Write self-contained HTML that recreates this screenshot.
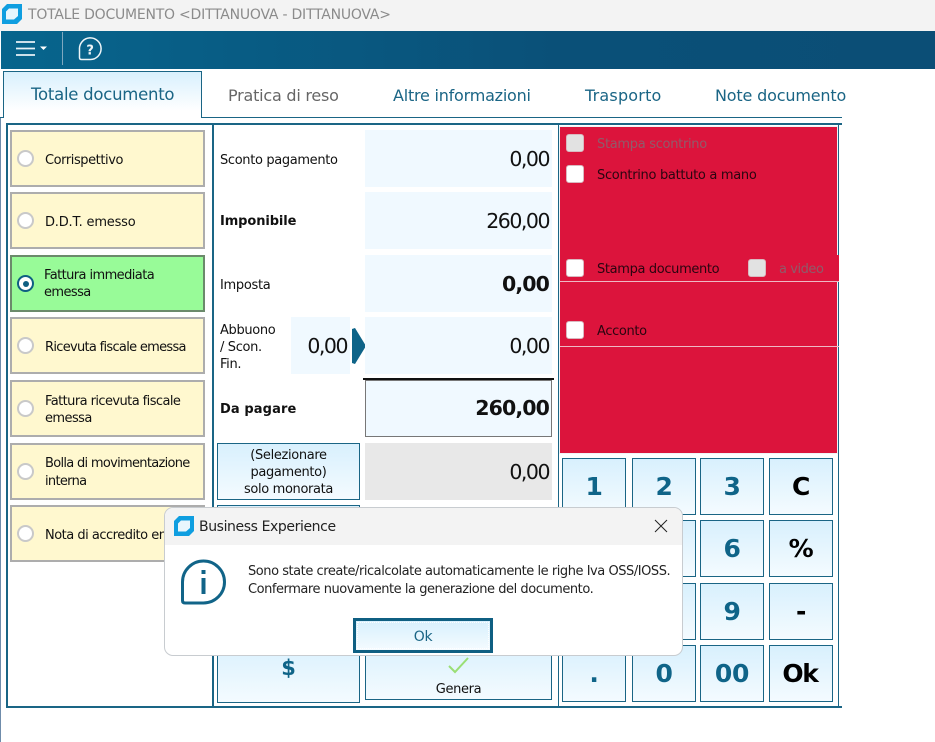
<!DOCTYPE html>
<html><head><meta charset="utf-8">
<style>
html,body{margin:0;padding:0;background:#fff}
#p{position:relative;width:935px;height:742px;overflow:hidden;background:#fff;font-family:"DejaVu Sans","Liberation Sans",sans-serif;font-size:13px;letter-spacing:-.35px;color:#111}
#p div,#p svg,#p span{position:absolute;box-sizing:border-box}
.t{white-space:nowrap;line-height:17px}
.tab{font-size:16px;white-space:nowrap;color:#1a6585;top:86px;line-height:20px;letter-spacing:-.22px}
.r{left:10px;width:195px;height:57px;background:#fff8cf;border:2px solid #adadad}
.rd{left:17px;width:17px;height:17px;border-radius:50%;background:#fff;border:2px solid #c9c9c9}
.v{left:365px;width:187px;height:57px;background:#f0f9ff;text-align:right;padding-right:3px;font-size:20.500px;line-height:58px;letter-spacing:-1.500px;color:#111}
.vb{font-weight:bold;letter-spacing:-.9px}
.b{background:linear-gradient(#d8f0fd,#f4fbff);border:1.5px solid #1a6585;text-align:center}
.k{width:64px;height:57px;background:linear-gradient(#d8f0fd,#f4fbff);border:1.5px solid #1a6585;text-align:center;font-size:25px;font-weight:bold;line-height:55px;color:#0f6488;letter-spacing:-.3px}
.c{left:566px;width:18px;height:18px;background:#fff;border:1px solid #d9b9c0;border-radius:3px}
</style></head><body><div id="p">
<div style="left:0;top:0;width:935px;height:31px;background:#f3f3f3"></div>
<svg style="left:2px;top:4px" width="20" height="20" viewBox="0 0 20 20"><path d="M5 0H20V15L15 20H0V5Z" fill="#0f9ee0"/><path d="M7 4.500H16V12L12 15.500H4V7.500Z" fill="#e8f6fd"/></svg>
<div class="t" style="left:28px;top:7px;font-size:14px;color:#8b8b8b;letter-spacing:-.23px">TOTALE DOCUMENTO &lt;DITTANUOVA - DITTANUOVA&gt;</div>
<div style="left:1px;top:31px;width:934px;height:38px;background:linear-gradient(90deg,#07658d,#0a5078 60%,#0b4e76)"></div>
<svg style="left:15px;top:40px" width="34" height="18" viewBox="0 0 34 18"><path d="M1 2H20M1 8.500H20M1 15H20" stroke="#e8f2f7" stroke-width="1.700" fill="none"/><path d="M25 6.500H32L28.500 10Z" fill="#fff"/></svg>
<div style="left:62px;top:32px;width:1px;height:33px;background:#7fa8bf"></div>
<svg style="left:78px;top:37px" width="25" height="24" viewBox="0 0 25 24"><path d="M1.500 12.500A10.800 10.800 0 1 1 12.500 22.500H3.500Q1.500 22.500 1.500 20.500Z" fill="none" stroke="#eef5f8" stroke-width="1.500"/><text x="12" y="17.500" font-family="DejaVu Sans" font-weight="bold" font-size="13" fill="#eef5f8" text-anchor="middle">?</text></svg>

<div style="left:0;top:118px;width:1px;height:624px;background:#6f8cab"></div>
<div style="left:0;top:117px;width:4px;height:1px;background:#1a6585"></div>
<div style="left:201px;top:117px;width:641px;height:1px;background:#1a6585"></div>
<div style="left:6px;top:123px;width:836px;height:1.500px;background:#1a6585"></div>
<div style="left:6px;top:123px;width:1.500px;height:584px;background:#1a6585"></div>
<div style="left:212px;top:123px;width:2px;height:584px;background:#1a6585"></div>
<div style="left:6px;top:706px;width:836px;height:1.500px;background:#1a6585"></div>
<div style="left:558px;top:124px;width:1px;height:582px;background:#1a6585"></div>
<div style="left:838px;top:124px;width:1px;height:582px;background:#1a6585"></div>

<div style="left:3px;top:71px;width:199px;height:47px;background:linear-gradient(#d8f0fd,#fff 85%);border:1px solid #1a6585;border-bottom:0"></div>
<div class="tab" style="left:31px;top:85px;font-size:16.500px;letter-spacing:-.25px">Totale documento</div>
<div class="tab" style="left:228px;color:#666;letter-spacing:-.22px">Pratica di reso</div>
<div class="tab" style="left:393px;letter-spacing:-.22px">Altre informazioni</div>
<div class="tab" style="left:585px;letter-spacing:.2px">Trasporto</div>
<div class="tab" style="left:715px;letter-spacing:-.17px">Note documento</div>

<div class="r" style="top:130px"></div><div class="rd" style="top:150px"></div><div class="t" style="left:45px;top:152px;letter-spacing:-.43px">Corrispettivo</div>
<div class="r" style="top:192px"></div><div class="rd" style="top:212px"></div><div class="t" style="left:45px;top:214px;letter-spacing:-.2px">D.D.T. emesso</div>
<div class="r" style="top:255px;background:#98fb98;border-color:#6b8a6b"></div><div class="rd" style="top:275px;border-color:#0f5f82;display:block"></div><div style="left:22.500px;top:280.500px;width:6px;height:6px;border-radius:50%;background:#0f5f82"></div><div class="t" style="left:44px;top:267px;letter-spacing:-.58px">Fattura immediata<br>emessa</div>
<div class="r" style="top:317px"></div><div class="rd" style="top:337px"></div><div class="t" style="left:45px;top:339px;letter-spacing:-.7px">Ricevuta fiscale emessa</div>
<div class="r" style="top:380px"></div><div class="rd" style="top:400px"></div><div class="t" style="left:45px;top:393px;letter-spacing:-.57px">Fattura ricevuta fiscale<br>emessa</div>
<div class="r" style="top:443px"></div><div class="rd" style="top:463px"></div><div class="t" style="left:45px;top:455px;letter-spacing:-.7px;line-height:18px">Bolla di movimentazione<br>interna</div>
<div class="r" style="top:505px"></div><div class="rd" style="top:525px"></div><div class="t" style="left:45px;top:527px;letter-spacing:-.5px">Nota di accredito emessa</div>

<div class="t" style="left:220px;top:152px">Sconto pagamento</div>
<div class="t" style="left:220px;top:213px;font-weight:bold;letter-spacing:-.1px">Imponibile</div>
<div class="t" style="left:220px;top:277px;letter-spacing:-.3px">Imposta</div>
<div class="t" style="left:220px;top:322px">Abbuono<br>/ Scon.<br>Fin.</div>
<div class="t" style="left:220px;top:401px;font-weight:bold;letter-spacing:.1px">Da pagare</div>
<div class="v" style="top:130px">0,00</div>
<div class="v" style="top:192px">260,00</div>
<div class="v vb" style="top:255px">0,00</div>
<div class="v" style="left:291px;width:59px;top:317px">0,00</div>
<svg style="left:352px;top:328px" width="15" height="36" viewBox="0 0 15 36"><path d="M0 1L3 0L14 18L3 36L0 35Z" fill="#0f6488"/></svg>
<div class="v" style="top:317px">0,00</div>
<div style="left:363px;top:378px;width:191px;height:1.500px;background:#111"></div>
<div class="v vb" style="top:380px;border:1.500px solid #777;line-height:55px;padding-right:2px">260,00</div>
<div class="v" style="top:443px;background:#e8e8e8">0,00</div>
<div class="b t" style="left:217px;top:443px;width:143px;height:57px;line-height:17px;padding-top:3px">(Selezionare<br>pagamento)<br>solo monorata</div>
<div class="b" style="left:217px;top:505px;width:143px;height:57px"></div>
<div class="b" style="left:217px;top:640px;width:143px;height:63px;color:#0f6488;font-size:21px;padding-top:14px;line-height:26px;font-weight:bold;letter-spacing:0">$</div>
<div class="b" style="left:365px;top:640px;width:187px;height:60px"></div>
<svg style="left:447px;top:656px" width="24" height="20" viewBox="0 0 24 20"><path d="M2 10L8 16L21 2" fill="none" stroke="#9adf75" stroke-width="2"/></svg>
<div class="t" style="left:365px;width:187px;text-align:center;top:681px">Genera</div>

<div style="left:559px;top:126px;width:279px;height:328px;background:#dc143c;border:1px solid #f0f4f6"></div>
<div style="left:560px;top:255px;width:279px;height:26px;background:#dc143c"></div>
<div style="left:560px;top:281px;width:279px;height:1px;background:#eeb8c4"></div>
<div style="left:560px;top:346px;width:279px;height:1px;background:#eeb8c4"></div>
<div class="c" style="top:134px;background:#e2e2e2"></div><div class="t" style="left:597px;top:136px;color:#8f5c6a;letter-spacing:-.3px">Stampa scontrino</div>
<div class="c" style="top:165px"></div><div class="t" style="left:597px;top:167px;color:#2a0510;letter-spacing:-.3px">Scontrino battuto a mano</div>
<div class="c" style="top:259px"></div><div class="t" style="left:597px;top:261px;color:#2a0510">Stampa documento</div>
<div class="c" style="left:748px;top:259px;background:#e2e2e2"></div><div class="t" style="left:779px;top:261px;color:#8f5c6a;letter-spacing:-.45px">a video</div>
<div class="c" style="top:321px"></div><div class="t" style="left:597px;top:323px;color:#2a0510">Acconto</div>

<div class="k" style="left:562px;top:458px">1</div><div class="k" style="left:632px;top:458px">2</div><div class="k" style="left:700px;top:458px">3</div><div class="k" style="left:769px;top:458px;color:#000">C</div>
<div class="k" style="left:562px;top:520px"></div><div class="k" style="left:632px;top:520px"></div><div class="k" style="left:700px;top:520px">6</div><div class="k" style="left:769px;top:520px;color:#000">%</div>
<div class="k" style="left:562px;top:583px"></div><div class="k" style="left:632px;top:583px"></div><div class="k" style="left:700px;top:583px">9</div><div class="k" style="left:769px;top:583px;color:#000">-</div>
<div class="k" style="left:562px;top:645px">.</div><div class="k" style="left:632px;top:645px">0</div><div class="k" style="left:700px;top:645px">00</div><div class="k" style="left:769px;top:645px;color:#000;letter-spacing:-1.300px;padding-right:2px">Ok</div>

<div style="left:164px;top:507px;width:519px;height:149px;background:#fff;border:1px solid #c8ccd0;border-radius:9px;overflow:hidden">
<div style="left:0;top:0;width:517px;height:37px;background:#f3f3f3"></div>
</div>
<svg style="left:174px;top:516px" width="20" height="20" viewBox="0 0 20 20"><path d="M5 0H20V15L15 20H0V5Z" fill="#0f9ee0"/><path d="M7 4.500H16V12L12 15.500H4V7.500Z" fill="#e8f6fd"/></svg>
<div class="t" style="left:199px;top:519px;font-size:14px;color:#222;letter-spacing:-.4px">Business Experience</div>
<svg style="left:654px;top:519px" width="14" height="14" viewBox="0 0 14 14"><path d="M1 1L13 13M13 1L1 13" stroke="#222" stroke-width="1" fill="none"/></svg>
<svg style="left:180px;top:558px" width="47" height="47" viewBox="0 0 47 47"><path d="M2.500 24A21 21 0 1 1 23.500 45H5Q2.500 45 2.500 42.500Z" fill="none" stroke="#116488" stroke-width="3"/><rect x="21.500" y="20" width="4" height="16" fill="#116488"/><rect x="21.500" y="12" width="4" height="4" fill="#116488"/></svg>
<div class="t" style="left:248px;top:563px;color:#222;line-height:18px;font-size:13px;letter-spacing:-.46px">Sono state create/ricalcolate automaticamente le righe Iva OSS/IOSS.<br>Confermare nuovamente la generazione del documento.</div>
<div style="left:353px;top:618px;width:140px;height:35px;background:linear-gradient(#d8f0fd,#f4fbff);border:3px solid #0f5f82;outline:1px dotted #fff;outline-offset:-5px;text-align:center;line-height:32px;color:#1a6585;font-size:14px">Ok</div>
</div></body></html>
